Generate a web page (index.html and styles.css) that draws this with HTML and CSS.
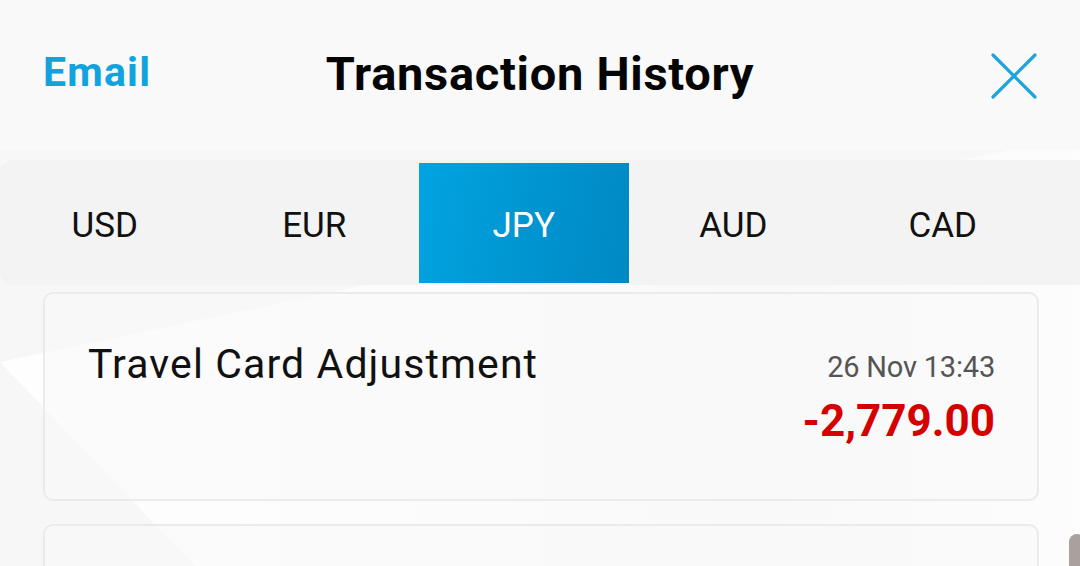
FILE: index.html
```html
<!DOCTYPE html>
<html lang="en">
<head>
    <meta charset="UTF-8">
    <meta name="viewport" content="width=device-width, initial-scale=1.0">
    <title>Transaction History</title>
    <link rel="stylesheet" href="styles.css">
</head>
<body>
    <div class="screen">
        <header class="topbar">
            <a class="email-link" href="#">Email</a>
            <h1 class="title">Transaction History</h1>
            <button class="close-button" aria-label="Close">
                <svg width="46" height="46" viewBox="0 0 46 46">
                    <path d="M2 2 L44 44 M44 2 L2 44" stroke="#1ea3da" stroke-width="3.2" stroke-linecap="round" fill="none"/>
                </svg>
            </button>
        </header>

        <nav class="tabs">
            <div class="tab">USD</div>
            <div class="tab">EUR</div>
            <div class="tab active">JPY</div>
            <div class="tab">AUD</div>
            <div class="tab">CAD</div>
        </nav>

        <div class="list">
            <div class="card">
                <div class="card-name">Travel Card Adjustment</div>
                <div class="card-meta">
                    <div class="card-date">26 Nov 13:43</div>
                    <div class="card-amount">-2,779.00</div>
                </div>
            </div>
            <div class="card"></div>
        </div>

        <div class="scroll-thumb"></div>
    </div>
</body>
</html>
```

FILE: styles.css
```css
/* Basic reset */
* {
    margin: 0;
    padding: 0;
    box-sizing: border-box;
    font-family: 'Roboto', 'Noto Sans', sans-serif;
}

body {
    background-color: #f7f7f7;
    color: #111;
    overflow: hidden;
}

.screen {
    position: relative;
    width: 1080px;
    height: 566px;
    overflow: hidden;
    background-color: #f7f7f7;
}

/* faint white light beam behind the list */
.screen::before {
    content: '';
    position: absolute;
    top: 0;
    left: 0;
    right: 0;
    bottom: 0;
    background: linear-gradient(to right, rgba(255, 255, 255, 0.95) 0%, rgba(255, 255, 255, 0.5) 45%, rgba(255, 255, 255, 0.2) 70%, rgba(255, 255, 255, 0.7) 100%);
    clip-path: polygon(0 362px, 1080px 135px, 1080px 566px, 195px 566px);
    z-index: 0;
}

.topbar,
.tabs,
.list {
    position: relative;
    z-index: 1;
}

.topbar {
    display: grid;
    grid-template-columns: 1fr auto 1fr;
    align-items: center;
    height: 150px;
    padding: 0 43px 0 43px;
    background-color: #f9f9f9;
}

.email-link {
    justify-self: start;
    color: #10a3dd;
    font-size: 41px;
    font-weight: 700;
    letter-spacing: 1.2px;
    text-decoration: none;
    margin-top: -6px;
}

.title {
    font-size: 47px;
    font-weight: 700;
    color: #050505;
    letter-spacing: 0.7px;
    margin-top: -4px;
}

.close-button {
    justify-self: end;
    background: none;
    border: none;
    width: 46px;
    height: 46px;
    margin-top: 2px;
    cursor: pointer;
}

.close-button svg {
    display: block;
}

.tabs {
    display: flex;
    margin-top: 10px;
    height: 125px;
    padding: 3px 0 2px;
    background-color: #f3f3f3;
    border-radius: 12px 0 0 12px;
}

.tab {
    width: 209.5px;
    display: flex;
    align-items: center;
    justify-content: center;
    font-size: 35px;
    color: #111;
    padding-top: 4px;
}

.tab.active {
    background: linear-gradient(100deg, #01a4e1 0%, #0093cf 60%, #0089c3 100%);
    color: #fff;
}

.list {
    padding: 7px 41px 0 43px;
    display: flex;
    flex-direction: column;
    gap: 23px;
}

.card {
    min-height: 209px;
    border: 2px solid #ebebeb;
    border-radius: 10px;
    background-color: rgba(248, 248, 248, 0.45);
    display: flex;
    justify-content: space-between;
    align-items: flex-start;
    padding: 46px 42px 0 43px;
}

.card-name {
    font-size: 41px;
    color: #111;
    letter-spacing: 1.1px;
}

.card-meta {
    text-align: right;
    padding-top: 10px;
}

.card-date {
    font-size: 29px;
    color: #555;
    letter-spacing: -0.2px;
    line-height: 1.2;
}

.card-amount {
    font-size: 44px;
    font-weight: 700;
    color: #d50000;
    line-height: 1.2;
    margin-top: 10px;
}

.scroll-thumb {
    position: absolute;
    left: 1069px;
    top: 534px;
    width: 16px;
    height: 60px;
    border-radius: 10px;
    background-color: #a9a19e;
    z-index: 2;
}
```
